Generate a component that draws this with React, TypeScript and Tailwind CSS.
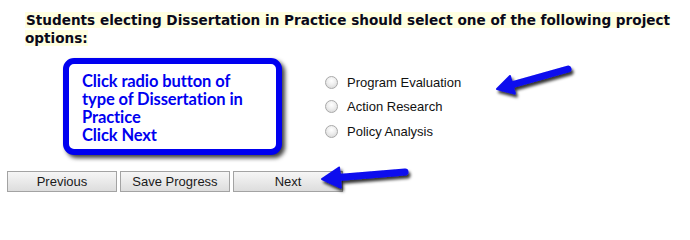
import React from "react";

function Radio({ label }: { label: string }) {
  return (
    <label className="flex h-[24.5px] items-center">
      <span className="box-border h-[13px] w-[13px] rounded-full border border-[#a9a9a9] bg-[radial-gradient(circle_at_50%_35%,#ffffff_0%,#eeeeee_45%,#d2d2d2_100%)]" />
      <span className="ml-[9px] text-[13px] text-[#111] [font-family:'Liberation_Sans',Arial,sans-serif]">
        {label}
      </span>
    </label>
  );
}

function Btn({ label }: { label: string }) {
  return (
    <button className="box-border h-[21px] w-[110px] border border-[#a3a3a3] bg-[linear-gradient(#f6f6f6,#dddddd)] text-[13px] leading-[19px] text-[#1a1a1a] [font-family:'Liberation_Sans',Arial,sans-serif]">
      {label}
    </button>
  );
}

export default function App() {
  return (
    <div className="relative h-[216px] w-[690px] overflow-hidden bg-white">
      <div className="pl-[25px] pr-[5px] pt-[11px]">
        <p className="text-[13.6px] font-bold leading-[18px] text-[#0a0a1a] [font-family:'DejaVu_Sans',Verdana,sans-serif]">
          <span className="bg-[#ffffe0] pl-[1px]">
            Students electing Dissertation in Practice should select one of the following project options:
          </span>
        </p>
      </div>
      <div className="ml-[325px] mt-[23px] flex flex-col">
        <Radio label="Program Evaluation" />
        <Radio label="Action Research" />
        <Radio label="Policy Analysis" />
      </div>
      <div className="ml-[7px] mt-[27px] flex gap-[3px]">
        <Btn label="Previous" />
        <Btn label="Save Progress" />
        <Btn label="Next" />
      </div>

      <div className="absolute left-[63px] top-[58px] box-border h-[97px] w-[219px] rounded-[11px] border-[6px] border-[#0000f0] bg-white pl-[13px] pt-[8px] shadow-[3px_3px_4px_rgba(0,0,0,0.75)]">
        <div className="text-[16.5px] font-bold leading-[18px] tracking-[-0.1px] text-[#0000f0] [font-family:Lato,'DejaVu_Sans',sans-serif]">
          Click radio button of
          <br />
          type of Dissertation in
          <br />
          Practice
          <br />
          Click Next
        </div>
      </div>

      <svg className="pointer-events-none absolute left-0 top-0" width="690" height="216" viewBox="0 0 690 216">
        <defs>
          <filter id="sh" x="-20%" y="-50%" width="140%" height="200%">
            <feDropShadow dx="2" dy="3" stdDeviation="1.6" floodColor="#000" floodOpacity="0.8" />
          </filter>
        </defs>
        <g filter="url(#sh)" fill="#0a0aee" stroke="#0a0aee">
          <line x1="568" y1="69" x2="511" y2="85" strokeWidth="7" strokeLinecap="round" />
          <polygon points="497,89 514.8,93.6 510,76" strokeWidth="2" strokeLinejoin="round" />
          <line x1="405" y1="172" x2="338" y2="177.6" strokeWidth="7" strokeLinecap="round" />
          <polygon points="322,179 340.7,187.5 339.1,167.5" strokeWidth="2" strokeLinejoin="round" />
        </g>
      </svg>
    </div>
  );
}
